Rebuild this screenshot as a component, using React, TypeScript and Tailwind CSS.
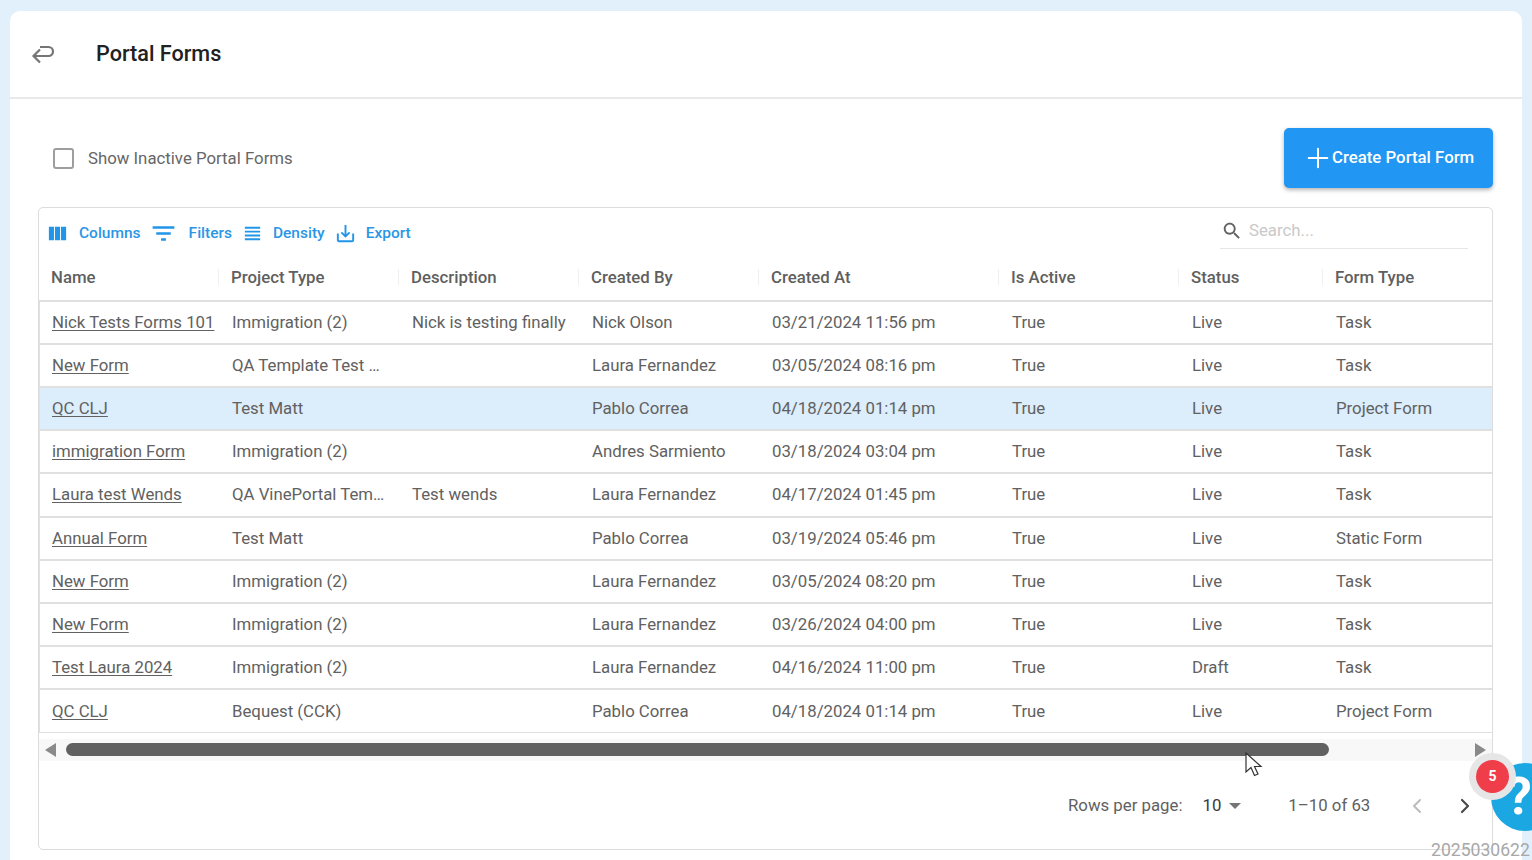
import { ChevronLeft, ChevronRight, Plus } from 'lucide-react'

const columns = [
  { label: 'Name', width: 'w-[180px]' },
  { label: 'Project Type', width: 'w-[180px]' },
  { label: 'Description', width: 'w-[180px]' },
  { label: 'Created By', width: 'w-[180px]' },
  { label: 'Created At', width: 'w-[240px]' },
  { label: 'Is Active', width: 'w-[180px]' },
  { label: 'Status', width: 'w-[144px]' },
  { label: 'Form Type', width: 'w-[168px]' },
]

const rows = [
  ['Nick Tests Forms 101', 'Immigration (2)', 'Nick is testing finally', 'Nick Olson', '03/21/2024 11:56 pm', 'True', 'Live', 'Task'],
  ['New Form', 'QA Template Test …', '', 'Laura Fernandez', '03/05/2024 08:16 pm', 'True', 'Live', 'Task'],
  ['QC CLJ', 'Test Matt', '', 'Pablo Correa', '04/18/2024 01:14 pm', 'True', 'Live', 'Project Form'],
  ['immigration Form', 'Immigration (2)', '', 'Andres Sarmiento', '03/18/2024 03:04 pm', 'True', 'Live', 'Task'],
  ['Laura test Wends', 'QA VinePortal Tem…', 'Test wends', 'Laura Fernandez', '04/17/2024 01:45 pm', 'True', 'Live', 'Task'],
  ['Annual Form', 'Test Matt', '', 'Pablo Correa', '03/19/2024 05:46 pm', 'True', 'Live', 'Static Form'],
  ['New Form', 'Immigration (2)', '', 'Laura Fernandez', '03/05/2024 08:20 pm', 'True', 'Live', 'Task'],
  ['New Form', 'Immigration (2)', '', 'Laura Fernandez', '03/26/2024 04:00 pm', 'True', 'Live', 'Task'],
  ['Test Laura 2024', 'Immigration (2)', '', 'Laura Fernandez', '04/16/2024 11:00 pm', 'True', 'Draft', 'Task'],
  ['QC CLJ', 'Bequest (CCK)', '', 'Pablo Correa', '04/18/2024 01:14 pm', 'True', 'Live', 'Project Form'],
]

const toolbar = [
  { label: 'Columns', box: 'w-[18px] mr-[13px]', path: 'M14.67 5v14H9.33V5h5.34zm1 14H21V5h-5.33v14zm-7.34 0V5H3v14h5.33z', icon: 'w-[23px] h-[23px]', gap: 'mr-[12px]' },
  { label: 'Filters', box: 'w-[22px] mr-[14px]', path: 'M10 18h4v-2h-4v2zM3 6v2h18V6H3zm3 7h12v-2H6v2z', icon: 'w-[29px] h-[29px]', gap: 'mr-[13px]' },
  { label: 'Density', box: 'w-[16px] mr-[12px]', path: 'M4 15h16v-2H4v2zm0 4h16v-2H4v2zm0-8h16V9H4v2zm0-6v2h16V5H4z', icon: 'w-[23px] h-[23px]', gap: 'mr-[12px]' },
  { label: 'Export', box: 'w-[18px] mr-[11px]', path: 'M19 12v7H5v-7H3v7c0 1.1.9 2 2 2h14c1.1 0 2-.9 2-2v-7h-2zm-6 .67l2.59-2.58L17 11.5l-5 5-5-5 1.41-1.41L11 12.67V3h2z', icon: 'w-[23px] h-[23px]', gap: '' },
]

export default function App() {
  return (
    <div className="relative h-[860px] w-[1532px] overflow-hidden bg-[#e2f0fb] pl-[10px] pt-[11px] font-['Roboto',sans-serif] text-[16.8px] text-[#616161]">
      <div className="h-[860px] w-[1512px] rounded-t-[10px] bg-white">
        {/* Page header */}
        <div className="flex h-[88px] items-center border-b-2 border-[#e9e9e9] pb-[2px]">
          <svg viewBox="0 0 24 24" className="ml-[21px] h-[24px] w-[24px]" fill="none" stroke="#757575" strokeWidth="2.2">
            <path d="M2.5 15h15a4.5 4.5 0 0 0 0-9H9" />
            <path d="M9 8.5l-6.5 6.5 6.5 6.5" />
          </svg>
          <h1 className="ml-[41px] mt-[2px] text-[21.6px] font-medium text-[#212121]">Portal Forms</h1>
        </div>

        <div className="pl-[28px] pr-[29px]">
          <div className="mt-[29px] flex h-[60px] items-center justify-between">
            <label className="flex items-center pl-[15px]">
              <span className="h-[21px] w-[21px] rounded-[3px] border-[2.5px] border-[#9e9e9e]" />
              <span className="ml-[14px] mt-[1px] text-[#666666]">Show Inactive Portal Forms</span>
            </label>
            <button className="flex h-[60px] w-[209px] items-center rounded-[5px] bg-[#2196f3] pl-[18px] font-medium text-white shadow-[0_2px_4px_rgba(0,0,0,0.3)]">
              <Plus className="mr-[-2px] h-[32px] w-[32px]" strokeWidth={1.5} />
              Create Portal Form
            </button>
          </div>

          {/* Table card */}
          <div className="mt-[19px] h-[643px] rounded-[5px] border border-[#dcdcdc]">
            <div className="flex h-[49px] items-center justify-between">
              <div className="flex items-center pl-[9px] pt-[3px] text-[15.5px] font-medium text-[#2b96e6]">
                {toolbar.map((item) => (
                  <div key={item.label} className={`flex items-center ${item.gap}`}>
                    <span className={`mt-[-2px] flex h-[24px] items-center justify-center ${item.box}`}>
                      <svg viewBox="0 0 24 24" className={`shrink-0 ${item.icon}`} fill="#2196e8">
                        <path d={item.path} />
                      </svg>
                    </span>
                    <span>{item.label}</span>
                  </div>
                ))}
              </div>
              <div className="mr-[24px] mt-[-7px] flex h-[40px] w-[248px] items-center border-b border-[#e6e6e6] pl-[1px] pt-[4px]">
                <svg viewBox="0 0 24 24" className="h-[22px] w-[22px]" fill="#616161">
                  <path d="M15.5 14h-.79l-.28-.27C15.41 12.59 16 11.11 16 9.5 16 5.91 13.09 3 9.5 3S3 5.91 3 9.5 5.91 16 9.5 16c1.61 0 3.09-.59 4.23-1.57l.27.28v.79l5 4.99L20.49 19l-4.99-5zm-6 0C7.01 14 5 11.99 5 9.5S7.01 5 9.5 5 14 7.01 14 9.5 11.99 14 9.5 14z" />
                </svg>
                <span className="ml-[6px] text-[#c9c9c9]">Search...</span>
              </div>
            </div>

            {/* Column headers */}
            <div className="flex h-[44.6px] border-b-2 border-[#e0e0e0]">
              {columns.map((col, i) => (
                <div key={col.label} className={`flex items-center justify-between pb-[2px] pl-[12px] font-medium text-[#5f5f5f] ${col.width}`}>
                  {col.label}
                  {i < columns.length - 1 && <span className="h-[16px] w-px bg-[#f0f0f0]" />}
                </div>
              ))}
            </div>

            {/* Rows */}
            <div className="border-l border-[#e0e0e0]">
              {rows.map((row, r) => (
                <div key={r} className={`flex h-[43.2px] items-center ${r === rows.length - 1 ? 'border-b' : 'border-b-2'} border-[#e0e0e0] ${r === 2 ? 'bg-[#dcedfb]' : ''}`}>
                  {row.map((cell, c) => (
                    <div key={c} className={`truncate pl-[12px] ${columns[c].width} ${c === 0 ? 'underline underline-offset-[2px]' : ''}`}>
                      {cell}
                    </div>
                  ))}
                </div>
              ))}
            </div>

            {/* Horizontal scrollbar */}
            <div className="mt-[5.4px] flex h-[22px] items-center bg-[#f8f8f8]">
              <span className="ml-[6px] h-0 w-0 border-y-[7px] border-r-[11px] border-y-transparent border-r-[#8a8a8a]" />
              <span className="ml-[10px] h-[13px] w-[1263px] rounded-full bg-[#616161]" />
              <span className="ml-auto mr-[6px] h-0 w-0 border-y-[7px] border-l-[11px] border-y-transparent border-l-[#8a8a8a]" />
            </div>

            {/* Pagination */}
            <div className="flex h-[90px] items-center pl-[1029px]">
              <span>Rows per page:</span>
              <span className="ml-[20px] text-[#3a3a3a]">10</span>
              <span className="ml-[8px] h-0 w-0 border-x-[6px] border-t-[6px] border-x-transparent border-t-[#757575]" />
              <span className="ml-[47px]">1–10 of 63</span>
              <ChevronLeft className="ml-[35px] h-[24px] w-[24px] text-[#bdbdbd]" strokeWidth={2} />
              <ChevronRight className="ml-[24px] h-[24px] w-[24px] text-[#4a4a4a]" strokeWidth={2.2} />
            </div>
          </div>
        </div>
      </div>

      {/* Floating overlays */}
      <div className="absolute left-[1491px] top-[763px] flex h-[68px] w-[68px] items-center rounded-full bg-[#1aa7e2] pl-[15px] text-[52px] font-bold leading-none text-white">?</div>
      <div className="absolute left-[1469px] top-[753px] h-[47px] w-[47px] rounded-full bg-[#e6e6e6]" />
      <div className="absolute left-[1476px] top-[760px] flex h-[33px] w-[33px] items-center justify-center rounded-full bg-[#ef3e4a] text-[14px] font-bold text-white">5</div>
      <svg viewBox="0 0 20 28" className="absolute left-[1245px] top-[752px] h-[28px] w-[20px]" fill="#ffffff" stroke="#333333" strokeWidth="1.2">
        <path d="M1 1v19l5-4.5 3.5 8 3.5-1.5-3.5-7.5H16z" />
      </svg>
      <span className="absolute left-[1431px] top-[839px] text-[17.6px] leading-[22px] text-[#a8a8a8]">2025030622</span>
    </div>
  )
}
